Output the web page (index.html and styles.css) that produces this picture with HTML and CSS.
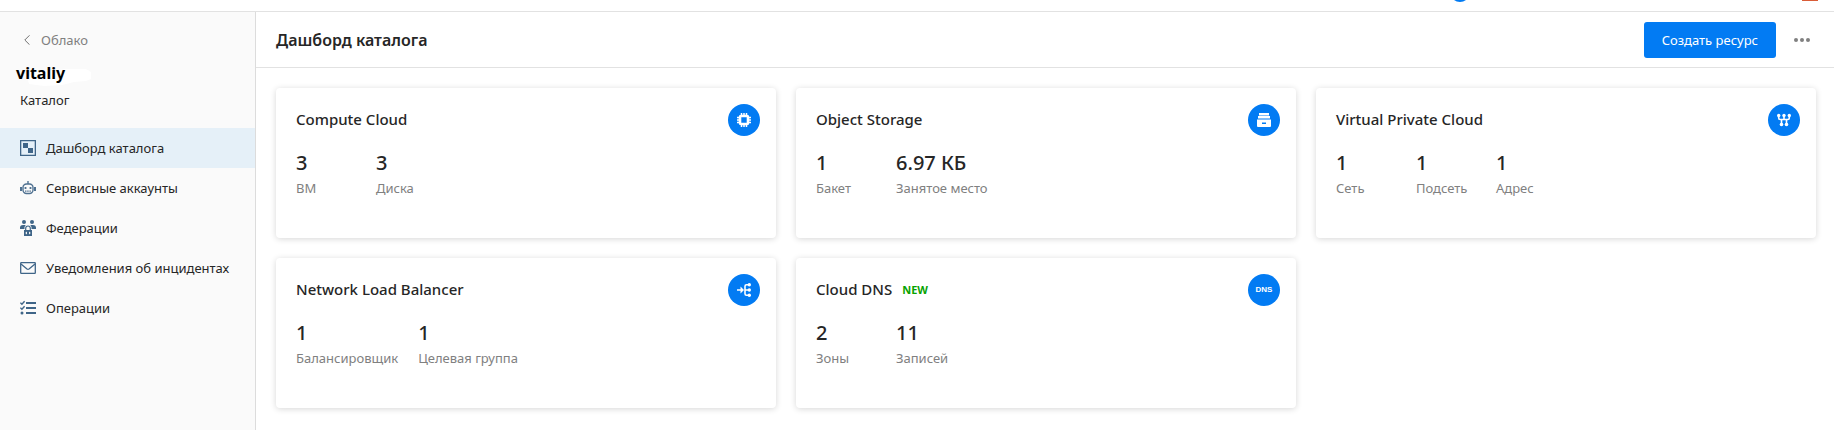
FILE: index.html
```html
<!DOCTYPE html>
<html lang="ru">
<head>
<meta charset="utf-8">
<meta name="viewport" content="width=device-width, initial-scale=1">
<title>Дашборд каталога</title>
<link rel="stylesheet" href="styles.css">
</head>
<body>
<div class="topbar">
  <svg class="topbar-status" width="20" height="2" viewBox="0 0 20 2"><circle cx="10" cy="-8" r="10" fill="#027bf3"/></svg>
  <svg class="topbar-user" width="16" height="1" viewBox="0 0 16 1"><rect width="16" height="1" fill="#d95c38"/></svg>
</div>
<div class="layout">
  <aside class="sidebar">
    <a class="back" href="#">
      <svg width="6" height="10" viewBox="0 0 6 10" fill="none" stroke="#707070"><path d="M5.5 .3.8 5l4.700 4.700"/></svg>
      Облако
    </a>
    <div class="folder">
      <svg class="folder-glow" width="68" height="18" viewBox="0 0 68 18"><path d="M3 9 12 4 42 1 62 1 67 4 67 11 62 13 50 14 38 17 20 18 5 16Z" fill="#fff"/></svg>
      <span class="folder-name">vitaliy</span>
    </div>
    <div class="folder-type">Каталог</div>
    <nav class="nav">
      <a class="nav-item nav-item-active" href="#">
        <svg width="16" height="16" viewBox="0 0 16 16" fill="#3f6588"><path d="M0 0h16v16H0zM1.300 1.300v13.400h13.400V1.300z" fill-rule="evenodd"/><path d="M3 3h5v5H3zM8 8h5v5H8z"/></svg>
        Дашборд каталога
      </a>
      <a class="nav-item" href="#">
        <svg width="16" height="16" viewBox="0 0 16 16" fill="none" stroke="#4f7191"><path d="M8 1v3" stroke-width="1.400"/><rect x="3" y="4" width="10" height="9.500" rx="3.500" stroke-width="1.400"/><path d="M1 7v4M15 7v4" stroke-width="2"/><path d="M5.500 7v2M10.500 7v2" stroke-width="1.800"/><path d="M5 11.200h6" stroke-width="1.200" stroke-dasharray="1.500 .7"/></svg>
        Сервисные аккаунты
      </a>
      <a class="nav-item" href="#">
        <svg width="16" height="16" viewBox="0 0 16 16" fill="#3f6588"><circle cx="4" cy="2" r="2"/><circle cx="12" cy="2" r="2"/><path d="M0 9V7.500C0 5.800 1.500 5 3 5h2.700L4.500 7v2zM16 9V7.500C16 5.800 14.500 5 13 5h-2.700L11.500 7v2z"/><path d="M5.700 10V8.300a2.300 2.300 0 0 1 4.600 0V10" fill="none" stroke="#3f6588" stroke-width="1.200"/><path d="M4 10h8v6H4zM7 11.500 5.200 13 7 14.500zM9 11.500v3l1.800-1.500z" fill-rule="evenodd"/></svg>
        Федерации
      </a>
      <a class="nav-item" href="#">
        <svg width="16" height="16" viewBox="0 0 16 16" fill="none" stroke="#3f6588" stroke-width="1.300"><rect x=".7" y="2.700" width="14.600" height="10.600" rx=".6"/><path d="M1 4l6 5q1 .7 2 0l6-5"/></svg>
        Уведомления об инцидентах
      </a>
      <a class="nav-item" href="#">
        <svg width="16" height="16" viewBox="0 0 16 16" fill="none" stroke="#3f6588"><path d="M6 3h10M6 8h10M6 13h10" stroke-width="2"/><path d="M.4 2.700l1.500 1.500L4.600 1.200M.4 7.700l1.500 1.500L4.600 6.200" stroke-width="1.400"/><circle cx="2" cy="13" r="1.500" fill="#3f6588" stroke="none"/></svg>
        Операции
      </a>
    </nav>
  </aside>
  <main class="main">
    <header class="header">
      <h1 class="page-title">Дашборд каталога</h1>
      <button class="create" type="button">Создать ресурс</button>
      <button class="more" type="button" aria-label="Ещё">
        <svg width="16" height="16" viewBox="0 0 16 16" fill="#808080"><circle cx="2" cy="8" r="2"/><circle cx="8" cy="8" r="2"/><circle cx="14" cy="8" r="2"/></svg>
      </button>
    </header>
    <div class="cards">
      <section class="card">
        <div class="card-head">
          <h2 class="card-title">Compute Cloud</h2>
          <span class="badge"><svg width="14" height="14" viewBox="0 0 14 14" fill="none" stroke="#fff"><rect x="3" y="3" width="8" height="8" rx="1" stroke-width="2.600"/><path d="M4.500 0v2M9.500 0v2M4.500 12v2M9.500 12v2M0 4.500h2M0 9.500h2M12 4.500h2M12 9.500h2M7 0v2M7 12v2M0 7h2M12 7h2" stroke-width="1.500"/></svg></span>
        </div>
        <dl class="stats">
          <div class="stat"><dt>ВМ</dt><dd>3</dd></div>
          <div class="stat"><dt>Диска</dt><dd>3</dd></div>
        </dl>
      </section>
      <section class="card">
        <div class="card-head">
          <h2 class="card-title">Object Storage</h2>
          <span class="badge"><svg width="14" height="14" viewBox="0 0 14 14" fill="#fff"><path d="M2 0h10v2.500H2zM1 3h12v2.500H1zM0 6.500h14v6.500q0 1-1 1h-12Q0 14 0 13zM5 9.500v1.500h4V9.500z" fill-rule="evenodd"/></svg></span>
        </div>
        <dl class="stats">
          <div class="stat"><dt>Бакет</dt><dd>1</dd></div>
          <div class="stat"><dt>Занятое место</dt><dd>6.97 КБ</dd></div>
        </dl>
      </section>
      <section class="card">
        <div class="card-head">
          <h2 class="card-title">Virtual Private Cloud</h2>
          <span class="badge"><svg width="14" height="14" viewBox="0 0 14 14" fill="#fff"><path d="M1.700 2v3q0 1.500 1.500 1.500h7.600q1.500 0 1.500-1.500V2M7 2v4.500M4.500 6.500v5M9.500 6.500v5" fill="none" stroke="#fff" stroke-width="1.600"/><circle cx="1.700" cy="2.500" r="1.700"/><circle cx="7" cy="2.500" r="1.700"/><circle cx="12.300" cy="2.500" r="1.700"/><circle cx="4.500" cy="11.500" r="1.800"/><circle cx="9.500" cy="11.500" r="1.800"/></svg></span>
        </div>
        <dl class="stats">
          <div class="stat"><dt>Сеть</dt><dd>1</dd></div>
          <div class="stat"><dt>Подсеть</dt><dd>1</dd></div>
          <div class="stat"><dt>Адрес</dt><dd>1</dd></div>
        </dl>
      </section>
      <section class="card">
        <div class="card-head">
          <h2 class="card-title">Network Load Balancer</h2>
          <span class="badge"><svg width="14" height="14" viewBox="0 0 14 14" fill="#fff"><path d="M0 7h5M12.500 1.700H9.500q-1.500 0-1.500 1.500v7.600q0 1.500 1.500 1.500h3M8 7h5" fill="none" stroke="#fff" stroke-width="1.600"/><path d="M3.500 3.500 7 7l-3.500 3.500z"/><circle cx="12.300" cy="1.700" r="1.700"/><circle cx="12.300" cy="7" r="1.700"/><circle cx="12.300" cy="12.300" r="1.700"/></svg></span>
        </div>
        <dl class="stats">
          <div class="stat"><dt>Балансировщик</dt><dd>1</dd></div>
          <div class="stat"><dt>Целевая группа</dt><dd>1</dd></div>
        </dl>
      </section>
      <section class="card">
        <div class="card-head">
          <h2 class="card-title">Cloud DNS</h2>
          <span class="label-new">NEW</span>
          <span class="badge badge-text">DNS</span>
        </div>
        <dl class="stats">
          <div class="stat"><dt>Зоны</dt><dd>2</dd></div>
          <div class="stat"><dt>Записей</dt><dd>11</dd></div>
        </dl>
      </section>
    </div>
  </main>
</div>
</body>
</html>
```

FILE: styles.css
```css
* { box-sizing: border-box; }
body {
  margin: 0;
  padding-right: 8px;
  min-height: 100vh;
  display: flex;
  flex-direction: column;
  background: #fff;
  color: #262626;
  font: 13px/20px "Noto Sans", "Open Sans", sans-serif;
}
h1, h2, dl, dd { margin: 0; }
a { color: inherit; text-decoration: none; }
button { font: inherit; border: 0; padding: 0; cursor: pointer; }
svg { display: block; flex: none; }

.topbar {
  height: 12px;
  padding-right: 16px;
  display: flex;
  justify-content: flex-end;
  gap: 332px;
  border-bottom: 1px solid #e2e2e2;
}
.layout { flex: 1; display: flex; }

.sidebar {
  width: 256px;
  flex: none;
  padding-top: 18px;
  background: #fafafa;
  border-right: 1px solid #dcdcdc;
}
.back {
  display: flex;
  align-items: center;
  gap: 11px;
  padding-left: 24px;
  color: #808080;
}
.folder {
  position: relative;
  margin-top: 12px;
  padding-left: 16px;
}
.folder-glow { position: absolute; left: 24px; top: 6px; }
.folder-name {
  position: relative;
  display: block;
  color: #000;
  font-size: 16px;
  font-weight: 700;
  line-height: 22px;
}
.folder-type { padding: 6px 20px 18px; }
.nav-item {
  display: flex;
  align-items: center;
  gap: 10px;
  height: 40px;
  padding-left: 20px;
}
.nav-item-active { background: #e5f0f8; }

.main { flex: 1; min-width: 0; }
.header {
  height: 56px;
  padding: 0 14px 0 20px;
  display: flex;
  align-items: center;
  border-bottom: 1px solid #e2e2e2;
}
.page-title {
  flex: 1;
  font-size: 16px;
  font-weight: 600;
  line-height: 20px;
}
.create {
  height: 36px;
  padding: 0 18px;
  border-radius: 3px;
  background: #027bf3;
  color: #fff;
}
.more {
  display: flex;
  align-items: center;
  justify-content: center;
  width: 36px;
  height: 36px;
  margin-left: 8px;
  background: none;
}

.cards {
  display: grid;
  grid-template-columns: repeat(3, 1fr);
  gap: 20px;
  padding: 20px 18px 20px 20px;
}
.card {
  min-height: 150px;
  padding: 16px 16px 16px 20px;
  border-radius: 4px;
  background: #fff;
  box-shadow: 0 1px 6px rgba(0, 0, 0, .16);
}
.card-head { display: flex; align-items: center; }
.card-title {
  padding-bottom: 2px;
  font-size: 15px;
  font-weight: 500;
  line-height: 20px;
}
.label-new {
  margin-left: 10px;
  color: #07a300;
  font-size: 11px;
  font-weight: 700;
}
.badge {
  display: flex;
  align-items: center;
  justify-content: center;
  width: 32px;
  height: 32px;
  margin-left: auto;
  border-radius: 50%;
  background: #027bf3;
}
.badge-text {
  color: #fff;
  font: 700 8px/12px "Liberation Sans Narrow", "Liberation Sans", sans-serif;
}
.stats {
  display: flex;
  gap: 20px;
  margin-top: 15px;
}
.stat {
  display: flex;
  flex-direction: column-reverse;
  min-width: 60px;
}
.stat dt { color: #808080; }
.stat dd {
  margin-bottom: 3px;
  font-size: 20px;
  font-weight: 500;
  line-height: 24px;
}
```
